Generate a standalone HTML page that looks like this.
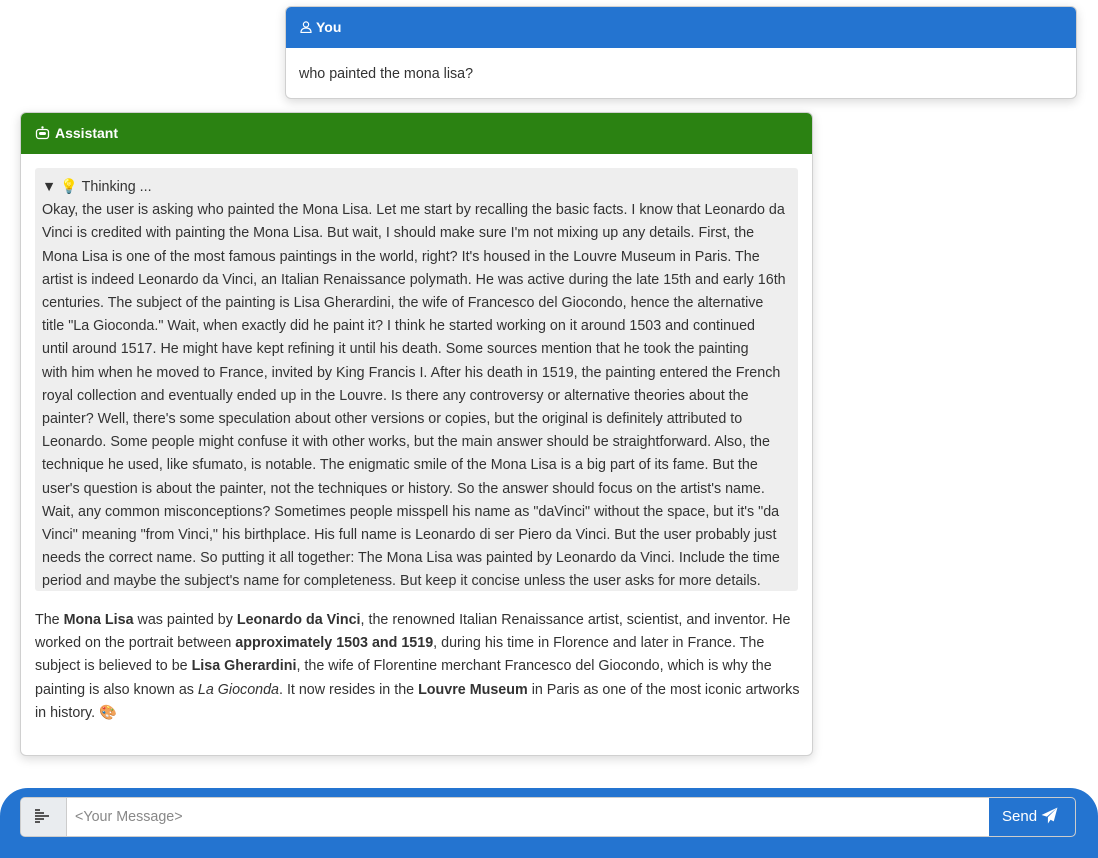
<!DOCTYPE html>
<html><head><meta charset="utf-8"><style>
body{margin:0;width:1098px;height:843px;background:#fff;font-family:"Liberation Sans",sans-serif;color:#333;position:relative;overflow:hidden}
.card{position:absolute;background:#fff;border:1px solid #d0d0d0;border-radius:6px;box-shadow:0 3px 10px rgba(0,0,0,.15);overflow:hidden}
.hdr{color:#fff;font-weight:bold;font-size:14px;height:41px;line-height:41px;padding-left:14px}
.l{white-space:nowrap;font-size:14.3px;line-height:23.2px}
</style></head><body>
<div class="card" style="left:285px;top:6px;width:790px;height:91px">
<div class="hdr" style="background:#2474d0"><svg width="12" height="12" viewBox="0 0 12 12" style="vertical-align:-1px;margin-right:4px"><circle cx="6" cy="3.5" r="2.6" fill="none" stroke="#fff" stroke-width="1.2"/><path d="M1 11.5c0-3 2-4.5 5-4.5s5 1.5 5 4.5z" fill="none" stroke="#fff" stroke-width="1.2"/></svg>You</div>
<div style="padding:18px 13px;font-size:14.3px">who painted the mona lisa?</div>
</div>
<div class="card" style="left:20px;top:112px;width:791px;height:642px">
<div class="hdr" style="background:#2b8212"><svg width="15" height="14" viewBox="0 0 15 14" style="vertical-align:-2px;margin-right:5px"><circle cx="7.5" cy="1.5" r="1.2" fill="#fff"/><rect x="1.5" y="3.5" width="12" height="9" rx="2.5" fill="none" stroke="#fff" stroke-width="1.3"/><rect x="4" y="6" width="7" height="3" rx="1.5" fill="#fff"/></svg>Assistant</div>
<div style="position:absolute;left:14px;top:55px;width:763px;height:423px;background:#eee;border-radius:3px;padding:8px 0 0 7px;box-sizing:border-box">
<div class="l">▼ 💡 Thinking ...</div>
<div class="l">Okay, the user is asking who painted the Mona Lisa. Let me start by recalling the basic facts. I know that Leonardo da</div>
<div class="l">Vinci is credited with painting the Mona Lisa. But wait, I should make sure I'm not mixing up any details. First, the</div>
<div class="l">Mona Lisa is one of the most famous paintings in the world, right? It's housed in the Louvre Museum in Paris. The</div>
<div class="l">artist is indeed Leonardo da Vinci, an Italian Renaissance polymath. He was active during the late 15th and early 16th</div>
<div class="l">centuries. The subject of the painting is Lisa Gherardini, the wife of Francesco del Giocondo, hence the alternative</div>
<div class="l">title "La Gioconda." Wait, when exactly did he paint it? I think he started working on it around 1503 and continued</div>
<div class="l">until around 1517. He might have kept refining it until his death. Some sources mention that he took the painting</div>
<div class="l">with him when he moved to France, invited by King Francis I. After his death in 1519, the painting entered the French</div>
<div class="l">royal collection and eventually ended up in the Louvre. Is there any controversy or alternative theories about the</div>
<div class="l">painter? Well, there's some speculation about other versions or copies, but the original is definitely attributed to</div>
<div class="l">Leonardo. Some people might confuse it with other works, but the main answer should be straightforward. Also, the</div>
<div class="l">technique he used, like sfumato, is notable. The enigmatic smile of the Mona Lisa is a big part of its fame. But the</div>
<div class="l">user's question is about the painter, not the techniques or history. So the answer should focus on the artist's name.</div>
<div class="l">Wait, any common misconceptions? Sometimes people misspell his name as "daVinci" without the space, but it's "da</div>
<div class="l">Vinci" meaning "from Vinci," his birthplace. His full name is Leonardo di ser Piero da Vinci. But the user probably just</div>
<div class="l">needs the correct name. So putting it all together: The Mona Lisa was painted by Leonardo da Vinci. Include the time</div>
<div class="l">period and maybe the subject's name for completeness. But keep it concise unless the user asks for more details.</div>
</div>
<div style="position:absolute;left:14px;top:496px">
<div class="l">The <b>Mona Lisa</b> was painted by <b>Leonardo da Vinci</b>, the renowned Italian Renaissance artist, scientist, and inventor. He</div>
<div class="l">worked on the portrait between <b>approximately 1503 and 1519</b>, during his time in Florence and later in France. The</div>
<div class="l">subject is believed to be <b>Lisa Gherardini</b>, the wife of Florentine merchant Francesco del Giocondo, which is why the</div>
<div class="l">painting is also known as <i>La Gioconda</i>. It now resides in the <b>Louvre Museum</b> in Paris as one of the most iconic artworks</div>
<div class="l">in history. 🎨</div>
</div>
</div>
<div style="position:absolute;left:0;top:788px;width:1098px;height:70px;background:#2474d0;border-radius:28px 28px 0 0"></div>
<div style="position:absolute;left:20px;top:797px;width:1056px;height:40px;background:#fff;border:1px solid #ccc;border-radius:5px;overflow:hidden;box-sizing:border-box">
<div style="position:absolute;left:0;top:0;width:45px;height:40px;background:#e9ecef;border-right:1px solid #ccc"><svg width="16" height="18" viewBox="0 0 16 18" style="position:absolute;left:14px;top:10px"><g fill="#555"><rect x="0" y="1" width="5" height="2"/><rect x="0" y="4" width="9" height="2"/><rect x="0" y="7" width="14" height="2"/><rect x="0" y="10" width="9" height="2"/><rect x="0" y="13" width="5" height="2"/></g></svg></div>
<div style="position:absolute;left:54px;top:11px;font-size:14.3px;color:#888">&lt;Your Message&gt;</div>
<div style="position:absolute;right:0;top:0;width:86px;height:38px;background:#2474d0;color:#fff;font-size:15px;line-height:38px;padding-left:13px;box-sizing:border-box">Send <svg width="17" height="17" viewBox="0 0 16 16" style="vertical-align:-3px"><path d="M15.5 0.5L0.5 7.5l5 1.5zM15.5 0.5L6.5 9.5l0 6 2.5-3.5 3 1.5z" fill="#fff"/></svg></div>
</div>
</body></html>
